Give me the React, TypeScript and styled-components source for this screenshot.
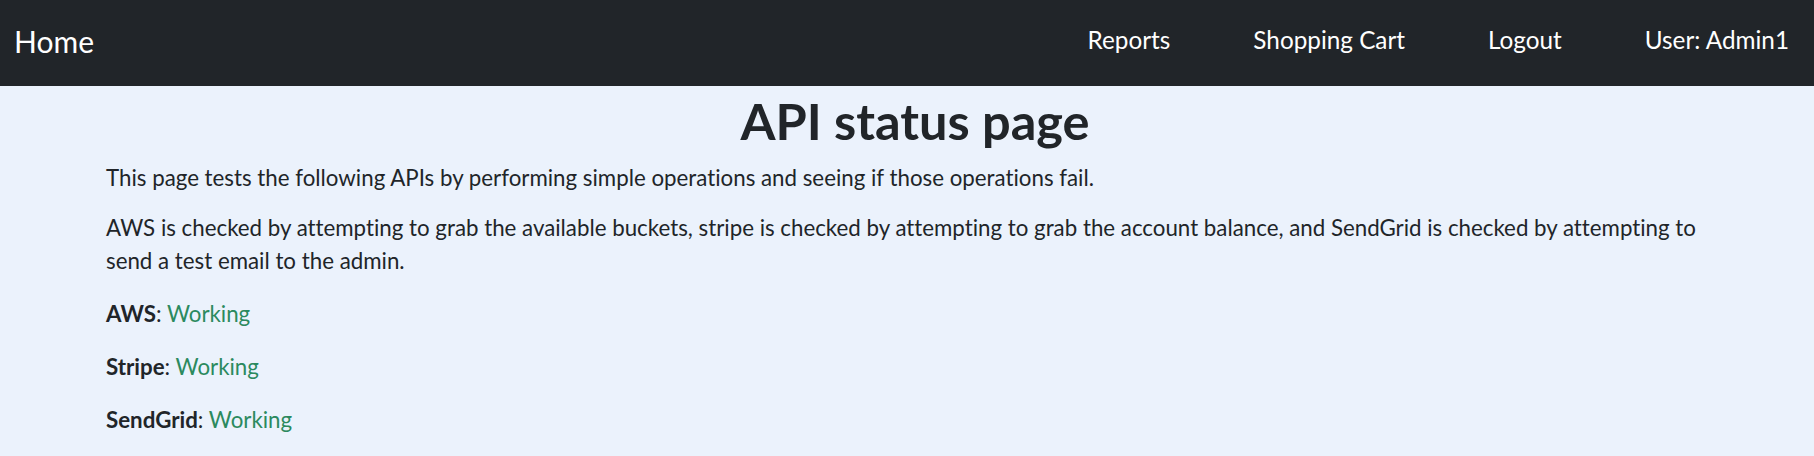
import React from "react";
import styled, { createGlobalStyle } from "styled-components";

const Global = createGlobalStyle`
  html, body { margin: 0; padding: 0; }
  body {
    background: #ebf2fc;
    font-family: Lato, "Noto Sans", sans-serif;
    font-variant-ligatures: none;
    color: #212529;
  }
`;

const NavBar = styled.nav`
  height: 86px;
  background: #212529;
  display: flex;
  align-items: center;
  justify-content: space-between;
  padding: 0 25px 0 14px;
  box-sizing: border-box;
`;

const Brand = styled.a`
  color: #fff;
  font-size: 30px;
  text-decoration: none;
  line-height: 1;
  margin-top: -5px;
`;

const NavList = styled.div`
  display: flex;
  align-items: center;
  gap: 83px;
`;

const NavLink = styled.a`
  color: #fff;
  font-size: 24.3px;
  text-decoration: none;
  line-height: 1;
  margin-top: -5px;
`;

const Container = styled.main`
  max-width: 1602px;
  margin: 0 auto;
  padding: 0 106px;
`;

const Title = styled.h1`
  text-align: center;
  font-size: 50.5px;
  font-weight: 700;
  line-height: 62px;
  margin: 4px 0 9px;
  padding-left: 16px;
`;

const Para = styled.p<{ $gap?: number }>`
  font-size: 22.3px;
  line-height: 33px;
  margin: 0 0 ${(p) => p.$gap ?? 20}px;
`;

const Label = styled.b`
  font-weight: 700;
`;

const Status = styled.span<{ $ok: boolean }>`
  color: ${(p) => (p.$ok ? "#2b8a5f" : "#dc3545")};
`;

const apis = ["AWS", "Stripe", "SendGrid"];

export default function App() {
  return (
    <>
      <Global />
      <NavBar>
        <Brand href="#">Home</Brand>
        <NavList>
          <NavLink href="#">Reports</NavLink>
          <NavLink href="#">Shopping Cart</NavLink>
          <NavLink href="#">Logout</NavLink>
          <NavLink href="#">User: Admin1</NavLink>
        </NavList>
      </NavBar>
      <Container>
        <Title>API status page</Title>
        <Para $gap={17}>
          This page tests the following APIs by performing simple operations and seeing if those operations fail.
        </Para>
        <Para>
          AWS is checked by attempting to grab the available buckets, stripe is checked by attempting to grab the
          account balance, and SendGrid is checked by attempting to send a test email to the admin.
        </Para>
        {apis.map((a) => (
          <Para key={a}>
            <Label>{a}</Label>: <Status $ok>Working</Status>
          </Para>
        ))}
      </Container>
    </>
  );
}
